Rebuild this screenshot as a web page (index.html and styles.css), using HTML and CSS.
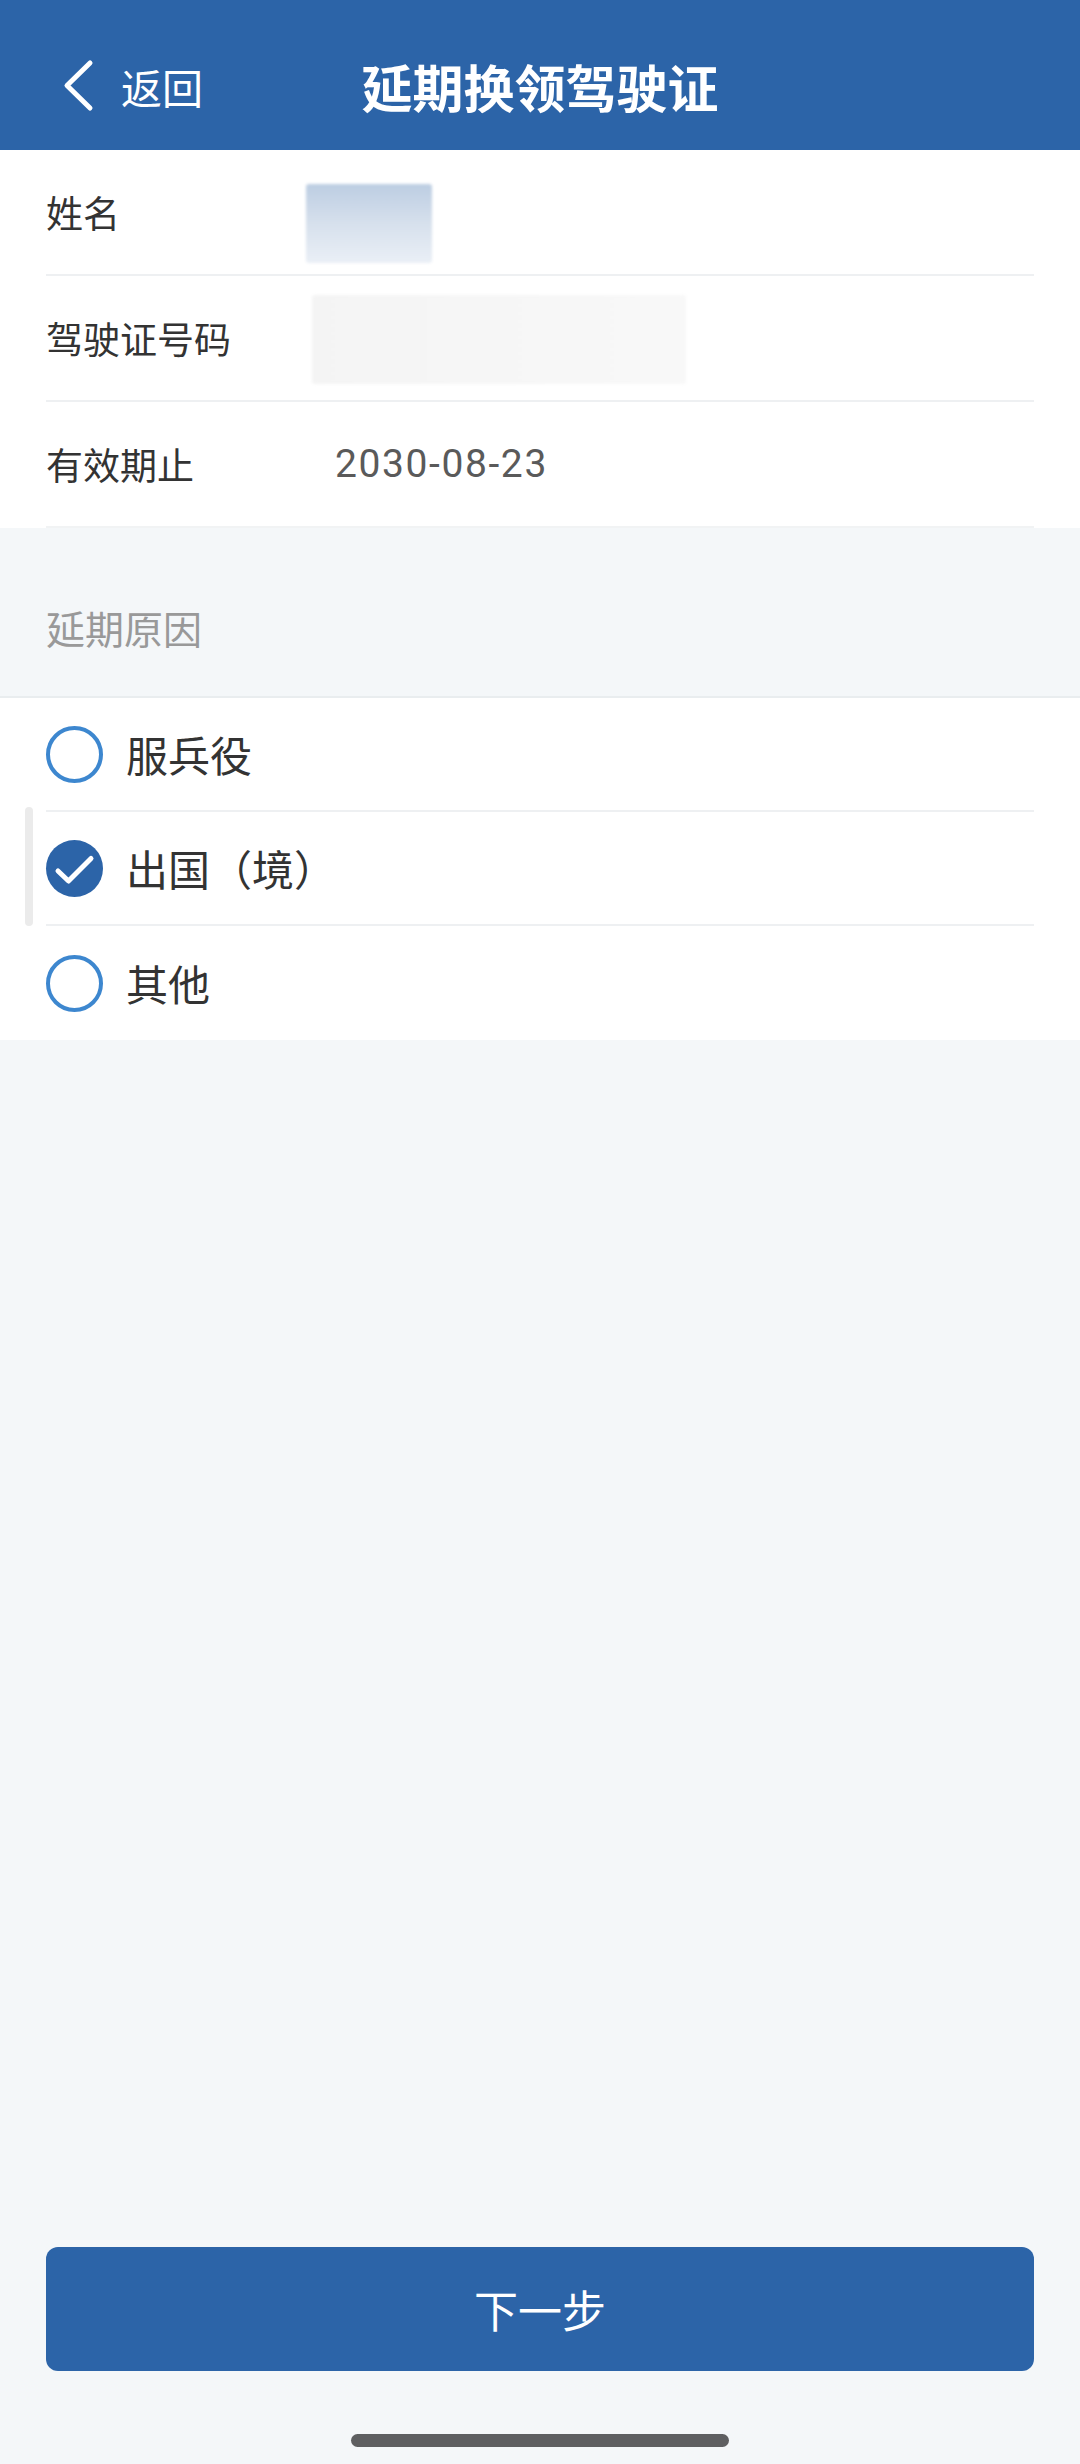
FILE: index.html
```html
<!DOCTYPE html>
<html lang="zh-CN">
<head>
<meta charset="utf-8">
<title>延期换领驾驶证</title>
<link rel="stylesheet" href="styles.css">
</head>
<body>
<div class="page">
  <header class="topbar">
    <div class="back">
      <svg class="chev" width="36" height="56" viewBox="0 0 36 56" aria-hidden="true">
        <path d="M30 5 L7 27.5 L30 50" fill="none" stroke="#fff" stroke-width="5" stroke-linecap="round" stroke-linejoin="round"/>
      </svg>
      <span class="back-text">返回</span>
    </div>
    <h1 class="title">延期换领驾驶证</h1>
    <div class="spacer-col"></div>
  </header>

  <section class="info">
    <div class="row">
      <span class="label">姓名</span>
      <span class="blur blur-name"></span>
    </div>
    <div class="row">
      <span class="label">驾驶证号码</span>
      <span class="blur blur-id"></span>
    </div>
    <div class="row">
      <span class="label">有效期止</span>
      <span class="value">2030-08-23</span>
    </div>
  </section>

  <div class="section-title">延期原因</div>

  <section class="options">
    <div class="option">
      <span class="radio"></span>
      <span class="opt-text">服兵役</span>
    </div>
    <div class="option">
      <span class="radio checked">
        <svg width="57" height="57" viewBox="0 0 57 57" aria-hidden="true">
          <path d="M12 31 L22.5 41 L45 18.5" fill="none" stroke="#fff" stroke-width="5" stroke-linecap="round" stroke-linejoin="round"/>
        </svg>
      </span>
      <span class="opt-text">出国（境）</span>
    </div>
    <div class="option">
      <span class="radio"></span>
      <span class="opt-text">其他</span>
    </div>
    <span class="scroll-ind"></span>
  </section>

  <div class="fill"></div>

  <footer class="footer">
    <button class="next-btn" type="button">下一步</button>
    <div class="home-area"><span class="home-bar"></span></div>
  </footer>
</div>
</body>
</html>
```

FILE: styles.css
```css
html, body {
  margin: 0;
  padding: 0;
}

body {
  background: #f4f7f9;
  font-family: "Noto Sans CJK SC", "Noto Sans", sans-serif;
  color: #333333;
}

.page {
  width: 1080px;
  min-height: 2464px;
  display: flex;
  flex-direction: column;
}

/* Header */
.topbar {
  height: 150px;
  box-sizing: border-box;
  padding-top: 22px;
  background: #2c64a8;
  display: grid;
  grid-template-columns: 1fr auto 1fr;
  align-items: center;
  color: #ffffff;
}

.back {
  display: flex;
  align-items: center;
  padding-left: 60px;
  height: 128px;
}

.chev {
  display: block;
  flex: none;
}

.back-text {
  margin-left: 25px;
  font-size: 41px;
  line-height: 1;
  color: #ffffff;
}

.title {
  margin: 0;
  font-size: 51px;
  font-weight: 700;
  line-height: 1;
  letter-spacing: 0;
  color: #ffffff;
  text-align: center;
}

/* Info block */
.info {
  background: #ffffff;
  padding: 0 46px;
}

.row {
  height: 126px;
  box-sizing: border-box;
  border-bottom: 2px solid #eef0f2;
  display: grid;
  grid-template-columns: 260px 1fr;
  align-items: center;
}

.row:last-child {
  border-bottom-color: #f1f3f4;
}

.label {
  font-size: 37px;
  line-height: 1;
  color: #333333;
}

.blur {
  display: block;
  border-radius: 3px;
  filter: blur(1.5px);
}

.blur-name {
  width: 126px;
  height: 79px;
  margin-top: 22px;
  background: linear-gradient(180deg, #bccde2 0%, #d6e0ec 50%, #eaeff6 100%);
}

.blur-id {
  width: 374px;
  height: 89px;
  margin-left: 6px;
  margin-top: 2px;
  background: linear-gradient(90deg, #f4f4f4 0%, #f6f6f6 50%, #f8f8f8 100%);
}

.value {
  padding-left: 29px;
  font-family: "Roboto", "Noto Sans CJK SC", sans-serif;
  font-size: 39px;
  letter-spacing: 1.6px;
  line-height: 1;
  color: #5a5a5a;
}

/* Section title */
.section-title {
  height: 170px;
  box-sizing: border-box;
  padding: 30px 46px 0;
  display: flex;
  align-items: center;
  font-size: 39px;
  line-height: 1;
  color: #999999;
  border-bottom: 2px solid #e9edef;
}

/* Options */
.options {
  position: relative;
  background: #ffffff;
  padding: 0 46px;
}

.option {
  height: 114px;
  box-sizing: border-box;
  display: flex;
  align-items: center;
  border-bottom: 2px solid #eef0f2;
}

.option:last-of-type {
  border-bottom: none;
}

.radio {
  flex: none;
  width: 57px;
  height: 57px;
  box-sizing: border-box;
  border: 4px solid #3d87cf;
  border-radius: 50%;
  background: #ffffff;
  display: flex;
  align-items: center;
  justify-content: center;
}

.radio.checked {
  border: none;
  background: #2c64a8;
}

.radio svg {
  display: block;
}

.opt-text {
  margin-left: 23px;
  font-size: 42px;
  line-height: 1;
  color: #333333;
}

.scroll-ind {
  position: absolute;
  left: 25px;
  top: 109px;
  width: 8px;
  height: 119px;
  border-radius: 4px;
  background: #ebebeb;
}

/* Fill + footer */
.fill {
  flex: 1;
}

.footer {
  padding: 0 46px;
}

.next-btn {
  display: flex;
  align-items: center;
  justify-content: center;
  width: 100%;
  height: 124px;
  border: none;
  border-radius: 12px;
  background: #2c64a8;
  color: #ffffff;
  font-family: "Noto Sans CJK SC", sans-serif;
  font-size: 44px;
  line-height: 1;
  padding: 0;
}

.home-area {
  height: 93px;
  display: flex;
  justify-content: center;
  align-items: flex-start;
}

.home-bar {
  display: block;
  margin-top: 63px;
  width: 378px;
  height: 13px;
  border-radius: 7px;
  background: #5e5f61;
}
```
